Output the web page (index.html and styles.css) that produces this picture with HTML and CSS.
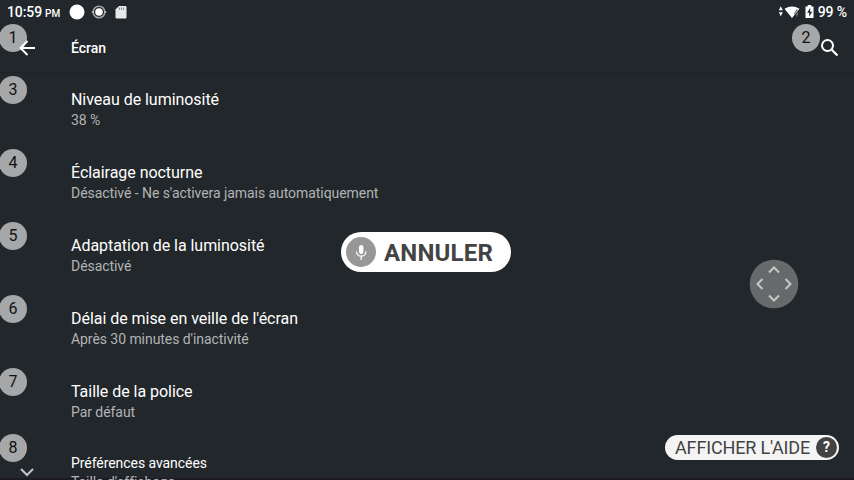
FILE: index.html
```html
<!DOCTYPE html>
<html lang="fr">
<head>
<meta charset="utf-8">
<title>Écran</title>
<link rel="stylesheet" href="styles.css">
</head>
<body>
<div class="screen">
  <div class="edge"></div>
  <header class="status">
    <span class="clock">10:59</span><span class="ampm">PM</span>
    <svg class="status-icons" width="60" height="18" viewBox="0 0 60 18">
      <circle cx="9" cy="9" r="7.5" fill="#fff"/>
      <circle cx="31" cy="9" r="5.800" fill="none" stroke="#a0a2a3" stroke-width="1.500"/>
      <circle cx="31" cy="9" r="3.800" fill="#fff"/>
      <path d="M23.800 9h2M36.200 9h2" stroke="#ccc" stroke-width="1.500"/>
      <path d="M51 3h6.500q1 0 1 1v10.500q0 1-1 1h-9q-1 0-1-1v-8z" fill="#e8e8e8"/>
      <path d="M51.500 4.500v2.500M53.500 4.500v2.500M55.500 4.500v2.500" stroke="#8b8d8e" stroke-width="1"/>
    </svg>
    <svg class="system-icons" width="38" height="18" viewBox="0 0 38 18">
      <path d="M.8 7.200l2-4 2 4zM.8 9.200l2 4 2-4z" fill="#fff"/>
      <path d="M6.500 5.800q7.500-4.600 15 0L14 15z" fill="#fff"/>
      <path d="M18.800 6.500l-2.500 4.500h4M19 6.500v7" fill="none" stroke="#6d7072" stroke-width="1"/>
      <path d="M27.500 3.500h2.200V2h3.600v1.500h2.200V15h-8z" fill="#fff"/>
      <path d="M32.200 4.800l-3 5h2v4l3-5h-2z" fill="#22272b"/>
    </svg>
    <span class="battery">99 %</span>
  </header>

  <nav class="toolbar">
    <span class="badge">1</span>
    <svg class="back" width="18" height="18" viewBox="0 0 18 18"><path d="M17 9H3M9.500 2l-7 7 7 7" fill="none" stroke="#fff" stroke-width="2"/></svg>
    <h1>Écran</h1>
    <span class="badge badge-search">2</span>
    <svg class="search" width="20" height="20" viewBox="0 0 20 20"><circle cx="7.500" cy="7.500" r="5.500" fill="none" stroke="#fff" stroke-width="2"/><path d="M11.500 11.500l6 6" stroke="#fff" stroke-width="2.200"/></svg>
  </nav>

  <main class="list">
    <section class="row"><span class="badge">3</span><h2>Niveau de luminosité</h2><p>38 %</p></section>
    <section class="row"><span class="badge">4</span><h2>Éclairage nocturne</h2><p>Désactivé - Ne s'activera jamais automatiquement</p></section>
    <section class="row"><span class="badge">5</span><h2>Adaptation de la luminosité</h2><p>Désactivé</p></section>
    <section class="row"><span class="badge">6</span><h2>Délai de mise en veille de l'écran</h2><p>Après 30 minutes d'inactivité</p></section>
    <section class="row"><span class="badge">7</span><h2>Taille de la police</h2><p>Par défaut</p></section>
    <section class="row advanced"><span class="badge">8</span>
      <svg class="expand" width="16" height="10" viewBox="0 0 16 10"><path d="M2 2l6 6 6-6" fill="none" stroke="#c3c5c6" stroke-width="2"/></svg>
      <h2>Préférences avancées</h2><p>Taille d'affichage</p></section>
  </main>

  <div class="cancel">
    <svg width="30" height="30" viewBox="0 0 30 30"><circle cx="15" cy="15" r="15" fill="#979797"/><rect x="13" y="8" width="4.400" height="9" rx="2.200" fill="#fff"/><path d="M10.500 14.500a4.700 4.700 0 0 0 9.400 0M15.200 19v4" fill="none" stroke="#fff" stroke-width="1.300"/></svg>
    <span>ANNULER</span>
  </div>
  <svg class="dpad" width="50" height="50" viewBox="0 0 50 50"><circle cx="25" cy="25" r="24.300" fill="#666a6b"/><path d="M20 13.500l5-5 5 5M20 36.500l5 5 5-5M13.500 20l-5 5 5 5M36.500 20l5 5-5 5" fill="none" stroke="#c6c8c8" stroke-width="2"/></svg>
  <div class="help"><span>AFFICHER L'AIDE</span><b>?</b></div>
</div>
</body>
</html>
```
FILE: styles.css
```css
* { box-sizing: border-box; }
body { margin: 0; font-family: Roboto, sans-serif; background: #22272b; color: #fff; }
.screen { position: relative; width: 854px; height: 480px; overflow: hidden; background: #22272b; }
h1, h2, p { margin: 0; }

.status { display: flex; align-items: center; height: 24px; padding: 0 7px 0 7px; font-weight: 500; }
.clock { font-size: 14px; line-height: 24px; letter-spacing: -0.1px; }
.ampm { font-size: 10px; line-height: 14px; margin: 3px 0 0 3px; }
.status-icons { margin-left: 8px; }
.system-icons { margin-left: auto; }
.battery { font-size: 14px; margin-left: 2px; letter-spacing: -0.1px; }

.toolbar { position: relative; display: flex; align-items: center; height: 49px; padding: 0 14px 0 18px; border-bottom: 1px solid #1e2327; }
.toolbar h1 { margin-left: 35px; font-size: 14px; font-weight: 500; line-height: 20px; }
.back { position: relative; z-index: 1; }
.search { margin-left: auto; }

.badge { position: absolute; left: -1px; top: 0; width: 28px; height: 28px; border-radius: 50%; background: #a6a7a8; color: #111; font-size: 16px; line-height: 27px; text-align: center; }
.badge-search { left: 792px; }

.list { position: relative; padding-top: 3px; }
.row { position: relative; height: 73px; padding: 14px 0 0 71px; }
.row h2 { font-size: 16px; font-weight: 400; line-height: 20px; letter-spacing: -0.04px; }
.row p { font-size: 14px; line-height: 20px; color: #b2b4b5; letter-spacing: -0.06px; }
.row.advanced { padding-top: 12px; }
.row.advanced h2 { font-size: 14px; letter-spacing: -0.06px; }
.row.advanced .badge { top: -7px; }
.row.advanced p { margin-top: -1px; }
.expand { position: absolute; left: 19px; top: 26px; }

.cancel { position: absolute; left: 341px; top: 232px; display: flex; align-items: center; width: 170px; height: 40px; padding-left: 5px; border-radius: 20px; background: #fff; color: #434343; font-size: 24px; font-weight: 700; letter-spacing: 0.2px; }
.cancel span { margin: 1px 0 0 8px; }
.dpad { position: absolute; left: 749px; top: 259px; }
.help { position: absolute; left: 665px; top: 435px; display: flex; align-items: center; justify-content: space-between; width: 174px; height: 25px; padding: 0 2px 0 10px; border-radius: 13px; background: #f4f4f4; color: #434343; font-size: 18px; letter-spacing: -0.15px; white-space: nowrap; }
.help b { width: 21px; height: 21px; border-radius: 50%; background: #434343; color: #fff; font-size: 14px; line-height: 21px; text-align: center; }
.edge { position: absolute; left: 0; right: 0; bottom: 0; height: 2px; background: #1d1b22; }
```
